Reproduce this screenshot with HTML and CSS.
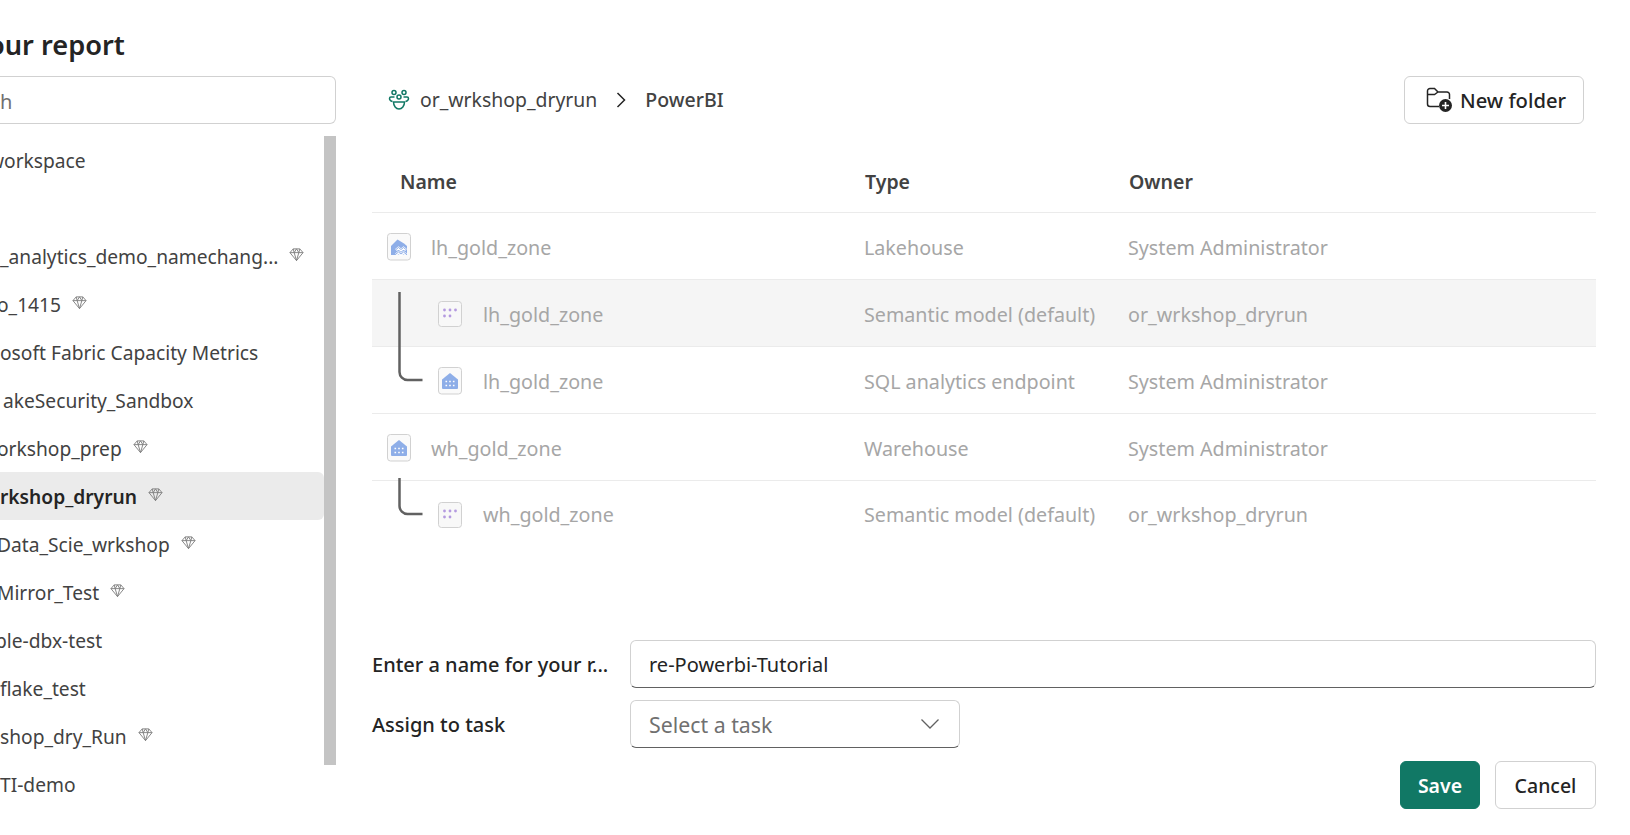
FILE: index.html
```html
<!DOCTYPE html>
<html lang="en">
<head>
    <meta charset="UTF-8">
    <meta name="viewport" content="width=device-width, initial-scale=1.0">
    <title>Save your report</title>
    <link rel="stylesheet" href="styles.css">
</head>
<body>
    <svg class="defs" width="0" height="0">
        <symbol id="gem" viewBox="0 0 16 16">
            <path d="M4.5 2h7L15 6l-7 8.5L1 6zM1 6h14M5.5 6L8 14.5 10.5 6M4.5 2l1 4L8 2l2.500 4 1-4" fill="none" stroke="#808080" stroke-width="1"/>
        </symbol>
        <symbol id="lakehouse" viewBox="0 0 24 28">
            <rect x="0.5" y="0.5" width="23" height="26.500" rx="3" fill="#fafafa" stroke="#d1d1d1"/>
            <path d="M4 13L10.500 6.500 17 10.500 20 13V22H4z" fill="#8eaee8"/>
            <path d="M9 17l2.500-2 2.500 2 2.500-2 2.500 2M9 21.500l2.500-2 2.500 2 2.500-2 2.500 2" fill="none" stroke="#fff" stroke-width="2.600"/>
            <path d="M9 16.500l2.500-2 2.500 2 2.500-2 2.500 2M9 21l2.500-2 2.500 2 2.500-2 2.500 2" fill="none" stroke="#8eaee8" stroke-width="1"/>
        </symbol>
        <symbol id="warehouse" viewBox="0 0 24 28">
            <rect x="0.5" y="0.5" width="23" height="26.500" rx="3" fill="#fafafa" stroke="#d1d1d1"/>
            <path d="M4 12.500L12 6l8 6.500v8.500a1 1 0 0 1-1 1H5a1 1 0 0 1-1-1z" fill="#8eaee8"/>
            <path d="M7.500 14.500h1.600M11.200 14.500h1.600M14.900 14.500h1.600M7.500 18.500h1.600M11.200 18.500h1.600M14.900 18.500h1.600" stroke="#fff" stroke-width="1.600"/>
        </symbol>
        <symbol id="model" viewBox="0 0 24 26">
            <rect x="0.5" y="0.5" width="23" height="25" rx="3" fill="#f8f8f8" stroke="#d1d1d1"/>
            <g fill="#b49ae0">
                <circle cx="6.500" cy="9" r="1.400"/><circle cx="12" cy="9" r="1.400"/><circle cx="17.500" cy="9" r="1.400"/>
                <circle cx="6.500" cy="15" r="1.400"/><circle cx="12" cy="15" r="1.400"/>
            </g>
        </symbol>
    </svg>

    <div class="dialog">
        <h1 class="title">our report</h1>
        <div class="columns">
            <div class="left">
                <input class="search" type="text" value="h" aria-label="Search">
                <div class="list-wrap">
                    <ul class="list">
                        <li class="cut-w">workspace</li>
                        <li></li>
                        <li>_analytics_demo_namechang... <svg class="gem"><use href="#gem"/></svg></li>
                        <li class="back">o_1415 <svg class="gem"><use href="#gem"/></svg></li>
                        <li>osoft Fabric Capacity Metrics</li>
                        <li class="fwd">akeSecurity_Sandbox</li>
                        <li class="back">orkshop_prep <svg class="gem"><use href="#gem"/></svg></li>
                        <li class="selected">rkshop_dryrun <svg class="gem"><use href="#gem"/></svg></li>
                        <li class="back">Data_Scie_wrkshop <svg class="gem"><use href="#gem"/></svg></li>
                        <li class="back">Mirror_Test <svg class="gem"><use href="#gem"/></svg></li>
                        <li class="cut-p">ple-dbx-test</li>
                        <li>flake_test</li>
                        <li>shop_dry_Run <svg class="gem"><use href="#gem"/></svg></li>
                        <li>TI-demo</li>
                    </ul>
                    <div class="scrollbar"></div>
                </div>
            </div>

            <div class="right">
                <div class="topbar">
                    <svg class="ws-icon" viewBox="0 0 22 22" fill="none" stroke="#117865" stroke-width="1.500">
                        <circle cx="6" cy="3.500" r="2"/><circle cx="16" cy="3.500" r="2"/><circle cx="11" cy="8" r="2"/>
                        <path d="M6.500 8H3a1.500 1.500 0 0 0-1.500 1.500c0 1.500 1 2.500 3 3M15.500 8H19a1.500 1.500 0 0 1 1.500 1.500c0 1.500-1 2.500-3 3"/>
                        <path d="M5.500 13h11c0 4-2.500 7-5.500 7s-5.500-3-5.500-7z"/>
                    </svg>
                    <span class="crumb">or_wrkshop_dryrun</span>
                    <svg class="crumb-sep" viewBox="0 0 12 18" fill="none" stroke="#242424" stroke-width="1.500"><path d="M2.500 2l7 7-7 7"/></svg>
                    <span class="crumb-current">PowerBI</span>
                    <button class="btn new-folder" type="button">
                        <svg class="folder-icon" viewBox="0 0 27 26">
                            <path d="M1.500 17V4a2.500 2.500 0 0 1 2.500-2.500h4.500L12 5h9a2.500 2.500 0 0 1 2.500 2.500V12M1.500 17a2.500 2.500 0 0 0 2.500 2.500h9M1.500 7.500h7L12 5" fill="none" stroke="#242424" stroke-width="1.500"/>
                            <circle cx="19.500" cy="18.500" r="6.500" fill="#242424"/>
                            <path d="M19.500 15v7M16 18.500h7" stroke="#fff" stroke-width="1.600"/>
                        </svg>
                        New folder
                    </button>
                </div>

                <div class="table">
                    <div class="row head">
                        <div class="name">Name</div>
                        <div class="type">Type</div>
                        <div class="owner">Owner</div>
                    </div>
                    <div class="row">
                        <div class="name"><svg class="tile"><use href="#lakehouse"/></svg>lh_gold_zone</div>
                        <div>Lakehouse</div>
                        <div>System Administrator</div>
                    </div>
                    <div class="row child shaded">
                        <svg class="tree long" viewBox="0 0 25 90" fill="none" stroke="#616161" stroke-width="2.500"><path d="M1.500 0v80a8 8 0 0 0 8 8h15"/></svg>
                        <div class="name"><svg class="tile"><use href="#model"/></svg>lh_gold_zone</div>
                        <div>Semantic model (default)</div>
                        <div>or_wrkshop_dryrun</div>
                    </div>
                    <div class="row child">
                        <div class="name"><svg class="tile"><use href="#warehouse"/></svg>lh_gold_zone</div>
                        <div>SQL analytics endpoint</div>
                        <div>System Administrator</div>
                    </div>
                    <div class="row">
                        <div class="name"><svg class="tile"><use href="#warehouse"/></svg>wh_gold_zone</div>
                        <div>Warehouse</div>
                        <div>System Administrator</div>
                    </div>
                    <div class="row child last">
                        <svg class="tree short" viewBox="0 0 25 39" fill="none" stroke="#616161" stroke-width="2.500"><path d="M1.500 0v28a8 8 0 0 0 8 8h15"/></svg>
                        <div class="name"><svg class="tile"><use href="#model"/></svg>wh_gold_zone</div>
                        <div>Semantic model (default)</div>
                        <div>or_wrkshop_dryrun</div>
                    </div>
                </div>

                <form class="form">
                    <label class="field-label" for="report">Enter a name for your r...</label>
                    <input class="field wide" id="report" type="text" value="re-Powerbi-Tutorial">
                    <span class="field-label">Assign to task</span>
                    <div class="field select">
                        <span>Select a task</span>
                        <svg class="chevron" viewBox="0 0 20 12" fill="none" stroke="#616161" stroke-width="1.300"><path d="M1.500 1.500L10 10l8.500-8.500"/></svg>
                    </div>
                </form>

                <div class="actions">
                    <button class="btn primary" type="button">Save</button>
                    <button class="btn cancel" type="button">Cancel</button>
                </div>
            </div>
        </div>
    </div>
</body>
</html>
```

FILE: styles.css
```css
html, body {
    margin: 0;
    height: 835px;
    overflow: hidden;
    background-color: #fff;
}
body {
    font-family: "Noto Sans", "Open Sans", sans-serif;
    font-size: 19.5px;
    color: #424242;
}
.defs {
    display: block;
    height: 0;
}
.dialog {
    height: 835px;
    padding-top: 25px;
    box-sizing: border-box;
}
.title {
    margin: 0 0 11px -12px;
    font-size: 27.2px;
    line-height: 40px;
    font-weight: 600;
    color: #242424;
}
.columns {
    display: flex;
    gap: 36px;
    padding-right: 34px;
}

/* left column */
.left {
    width: 336px;
    flex: none;
}
.search {
    display: block;
    width: 100%;
    height: 48px;
    box-sizing: border-box;
    padding: 3px 0 0;
    border: 1px solid #d1d1d1;
    border-left: none;
    border-radius: 0 6px 6px 0;
    font: inherit;
    font-size: 20px;
    color: #707070;
    outline: none;
}
.list-wrap {
    display: flex;
    align-items: flex-start;
    margin-top: 12px;
    height: 685px;
}
.list {
    width: 324px;
    margin: 0;
    padding: 0;
    list-style: none;
    font-size: 19.2px;
}
.list li {
    height: 48px;
    line-height: 49px;
    white-space: nowrap;
}
.list .selected {
    background-color: #ebebeb;
    border-radius: 0 6px 6px 0;
    font-weight: 600;
    color: #242424;
}
/* names run off the left edge of the window, by different amounts */
.list .cut-w {
    text-indent: -11px;
}
.list .cut-p {
    text-indent: -5px;
}
.list .back {
    text-indent: -3px;
}
.list .fwd {
    text-indent: 3px;
}
.gem {
    width: 15px;
    height: 15px;
    margin-left: 6px;
    vertical-align: 2px;
}
.scrollbar {
    width: 12px;
    height: 629px;
    background-color: #c4c4c4;
}

/* right column */
.right {
    flex: 1;
    min-width: 0;
}
.topbar {
    display: flex;
    align-items: center;
    height: 48px;
    box-sizing: border-box;
    padding: 0 12px 1px 16px;
}
.ws-icon {
    width: 22px;
    height: 22px;
    margin-right: 10px;
}
.crumb {
    font-size: 19.4px;
}
.crumb-sep {
    width: 12px;
    height: 18px;
    margin: 0 18px 0 18px;
}
.crumb-current {
    font-weight: 500;
    color: #424242;
}
.btn {
    box-sizing: border-box;
    height: 48px;
    border: 1px solid #d1d1d1;
    border-radius: 6px;
    background-color: #fff;
    font: inherit;
    font-weight: 600;
    color: #242424;
    cursor: pointer;
}
.new-folder {
    display: flex;
    align-items: center;
    gap: 7px;
    width: 180px;
    margin-left: auto;
    padding: 0 0 0 21px;
    font-size: 20.2px;
    font-weight: 500;
}
.folder-icon {
    width: 27px;
    height: 26px;
}

.table {
    margin-top: 26px;
    height: 423px;
}
.row {
    position: relative;
    display: grid;
    grid-template-columns: 492px 264px 1fr;
    align-items: center;
    height: 67px;
    box-sizing: border-box;
    padding-top: 2px;
    border-bottom: 1px solid #ebebeb;
    font-size: 19.7px;
    color: #a6a6a6;
}
.row .name {
    display: flex;
    align-items: center;
    padding-left: 15px;
}
.row.child .name {
    padding-left: 66px;
}
.row.shaded {
    background-color: #f5f5f5;
}
.row.last {
    padding-top: 0;
    border-bottom: none;
}
.row.head {
    height: 63px;
    padding-top: 0;
    font-size: 19.5px;
    font-weight: 600;
    color: #424242;
}
.row.head .name {
    padding-left: 28px;
}
.row.head .type {
    padding-left: 1px;
}
.row.head .owner {
    padding-left: 1px;
}
.tile {
    width: 24px;
    height: 28px;
    margin-right: 20px;
    flex: none;
}
.row.child .tile {
    margin-right: 21px;
}
/* connector between parent and child items, crosses the row border */
.tree {
    position: absolute;
    left: 26px;
    width: 25px;
    z-index: 1;
}
.tree.long {
    top: 12px;
    height: 90px;
}
.tree.short {
    top: -3px;
    height: 39px;
}

.form {
    display: grid;
    grid-template-columns: 258px 1fr;
    grid-auto-rows: 48px;
    row-gap: 12px;
    align-items: center;
    margin-top: 67px;
}
.field-label {
    font-size: 20px;
    font-weight: 500;
    color: #242424;
    white-space: nowrap;
}
.field {
    box-sizing: border-box;
    height: 48px;
    padding: 0 18px;
    border: 1px solid #d1d1d1;
    border-bottom-color: #616161;
    border-radius: 6px;
    font: inherit;
    font-size: 20px;
    color: #242424;
    outline: none;
}
.wide {
    width: 100%;
}
.select {
    display: flex;
    align-items: center;
    justify-content: space-between;
    width: 330px;
    padding-right: 19px;
    font-size: 21.3px;
    color: #707070;
}
.chevron {
    width: 20px;
    height: 12px;
}
.actions {
    display: flex;
    justify-content: flex-end;
    gap: 15px;
    margin-top: 13px;
}
.primary {
    width: 80px;
    border-color: #117865;
    background-color: #117865;
    color: #fff;
}
.cancel {
    width: 101px;
    font-weight: 500;
}
```
